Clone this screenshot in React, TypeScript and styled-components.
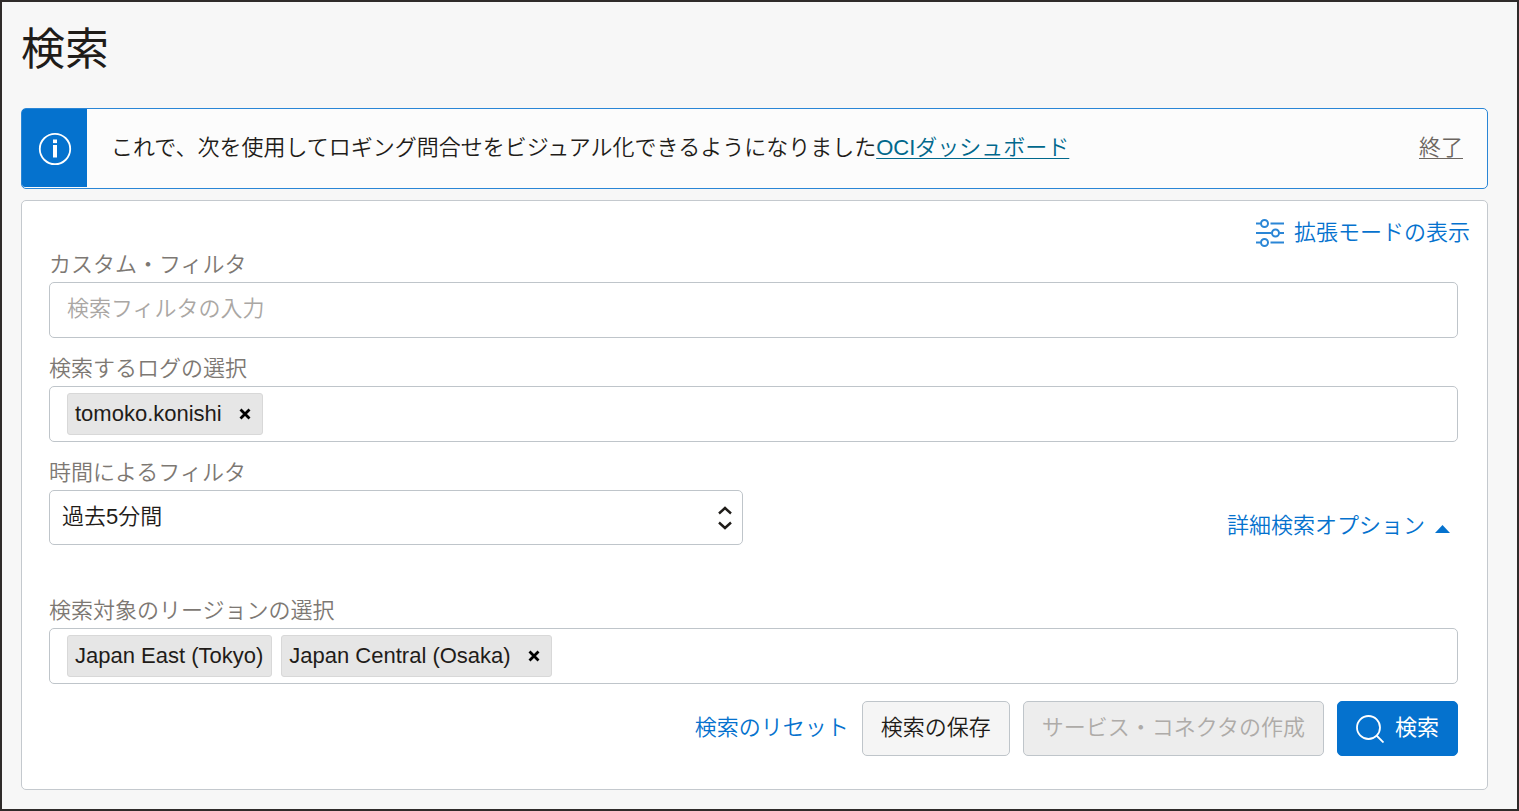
import React, { useState } from "react";
import styled, { createGlobalStyle, css } from "styled-components";

const GlobalStyle = createGlobalStyle`
  *, *::before, *::after { box-sizing: border-box; }
  body {
    margin: 0;
    background: #f7f7f7;
    color: #1f1c19;
    font-family: "Liberation Sans", "Noto Sans CJK JP", sans-serif;
    font-size: 22px;
    font-weight: 350;
    line-height: 28px;
  }
  button, input, select { font: inherit; color: inherit; }
`;

const Page = styled.main`
  min-height: 100vh;
  padding: 0 29px 19px 19px;
  border: 2px solid #2f2b2a;
`;

const Title = styled.h1`
  margin: 0;
  padding: 20px 0 30px;
  font-size: 44px;
  font-weight: 400;
  line-height: 56px;
`;

const Banner = styled.section`
  display: flex;
  min-height: 81px;
  margin-bottom: 11px;
  padding-bottom: 1px;
  border: 1px solid #2a86d6;
  border-radius: 5px;
  background: #fcfcfc;
`;

const BannerIcon = styled.div`
  display: flex;
  flex: none;
  align-items: center;
  justify-content: center;
  width: 65px;
  padding-top: 2px;
  border-radius: 3px 0 0 3px;
  background: #0572ce;
`;

const BannerBody = styled.div`
  display: flex;
  flex: 1;
  align-items: center;
  justify-content: space-between;
  gap: 24px;
  padding: 0 24px;
`;

const BannerText = styled.p`
  margin: 0;
`;

const BannerLink = styled.a`
  color: #00688c;
  text-decoration: underline;
  text-decoration-thickness: 1px;
  text-underline-offset: 3px;
`;

const DismissButton = styled.button`
  flex: none;
  padding: 0;
  border: 0;
  background: none;
  color: #6b6560;
  text-decoration: underline;
  text-decoration-thickness: 1px;
  text-underline-offset: 3px;
  cursor: pointer;
`;

const Panel = styled.section`
  padding: 18px 17px 33px 27px;
  border: 1px solid #c4c9ce;
  border-radius: 5px;
  background: #fff;
`;

const PanelTools = styled.div`
  display: flex;
  justify-content: flex-end;
  margin-bottom: 4px;
`;

const LinkButton = styled.button`
  display: inline-flex;
  align-items: center;
  gap: 10px;
  padding: 0;
  border: 0;
  background: none;
  color: #0572ce;
  cursor: pointer;
`;

const Form = styled.form`
  display: flex;
  flex-direction: column;
  gap: 17px;
  margin-right: 12px;
`;

const Field = styled.div`
  display: flex;
  flex-direction: column;
  gap: 3px;
`;

const Label = styled.label`
  color: #7d7873;
`;

const controlFrame = css`
  border: 1px solid #bfc5ca;
  border-radius: 5px;
  background: #fff;
`;

const TextInput = styled.input`
  ${controlFrame}
  width: 100%;
  height: 56px;
  padding: 0 17px 2px;
  &::placeholder { color: #aaa7a4; opacity: 1; }
`;

const TagBox = styled.div`
  ${controlFrame}
  display: flex;
  align-items: center;
  gap: 9px;
  min-height: 56px;
  padding: 0 17px;
`;

const TagInput = styled.input`
  flex: 1;
  min-width: 40px;
  height: 42px;
  padding: 0;
  border: 0;
  outline: 0;
  background: none;
`;

const Tag = styled.span`
  display: inline-flex;
  flex: none;
  align-items: center;
  gap: 17px;
  height: 42px;
  padding: 0 8px 0 7px;
  border: 1px solid #d8d8d8;
  border-radius: 3px;
  background: #e6e6e6;
`;

const TagRemove = styled.button`
  display: flex;
  margin-right: 3px;
  padding: 0;
  border: 0;
  background: none;
  color: #000;
  cursor: pointer;
`;

const TimeRow = styled.div`
  display: grid;
  grid-template-columns: 1fr 1fr;
  align-items: end;
  gap: 21px;
  margin-bottom: 35px;
`;

const SelectWrap = styled.div`
  display: grid;
  align-items: center;
  & > * { grid-area: 1 / 1; }
  & > svg {
    justify-self: end;
    margin-right: 11px;
    pointer-events: none;
  }
`;

const Select = styled.select`
  ${controlFrame}
  width: 100%;
  height: 55px;
  padding: 0 40px 2px 12px;
  appearance: none;
`;

const Advanced = styled.div`
  display: flex;
  justify-content: flex-end;
  padding: 0 8px 5px 0;
`;

const Actions = styled.div`
  display: flex;
  align-items: center;
  justify-content: flex-end;
  gap: 13px;
`;

const ActionButton = styled.button<{ $primary?: boolean }>`
  display: inline-flex;
  align-items: center;
  gap: 11px;
  height: 55px;
  padding: 0 18px;
  border: 1px solid ${(p) => (p.$primary ? "#0572ce" : "#bfc5ca")};
  border-radius: 5px;
  background: ${(p) => (p.$primary ? "#0572ce" : "#f5f5f5")};
  color: ${(p) => (p.$primary ? "#fff" : "#1f1c19")};
  font-weight: ${(p) => (p.$primary ? 400 : 350)};
  cursor: pointer;
  &:disabled {
    background: #ededed;
    color: #aeaba8;
    cursor: default;
  }
`;

const InfoIcon = () => (
  <svg width="34" height="34" viewBox="0 0 34 34" fill="none" aria-hidden="true">
    <circle cx="17" cy="17" r="15.2" stroke="#fff" strokeWidth="1.8" />
    <rect x="15" y="7.5" width="4" height="3.6" fill="#fff" />
    <rect x="15" y="13" width="4" height="12.5" fill="#fff" />
  </svg>
);

const SlidersIcon = () => (
  <svg width="28" height="28" viewBox="0 0 28 28" fill="none" stroke="#2a86d6" strokeWidth="2" aria-hidden="true">
    <path d="M0 4.500h4.500M14.500 4.500H28M0 14h15.500M23.500 14H28M0 23.500h4.500M14.500 23.500H28" />
    <circle cx="8.500" cy="4.500" r="3.500" />
    <circle cx="19.500" cy="14" r="3.500" />
    <circle cx="8.500" cy="23.500" r="3.500" />
  </svg>
);

const CrossIcon = () => (
  <svg width="12" height="12" viewBox="0 0 12 12" stroke="currentColor" strokeWidth="2.8" aria-hidden="true">
    <path d="M1.500 1.500l9 9M10.500 1.500l-9 9" />
  </svg>
);

const UpDownIcon = () => (
  <svg width="14" height="24" viewBox="0 0 14 24" fill="none" stroke="#1f1c19" strokeWidth="2.4" aria-hidden="true">
    <path d="M1 7.500l6-5.500 6 5.500M1 16.500l6 5.500 6-5.500" />
  </svg>
);

const CaretUpIcon = () => (
  <svg width="15" height="8" viewBox="0 0 15 8" aria-hidden="true">
    <path d="M0 8L7.500 0L15 8z" fill="#0572ce" />
  </svg>
);

const SearchIcon = () => (
  <svg width="28" height="28" viewBox="0 0 28 28" fill="none" stroke="#fff" strokeWidth="1.8" aria-hidden="true">
    <circle cx="12.500" cy="12.500" r="11.500" />
    <path d="M20.500 20.500l7 7" />
  </svg>
);

const CaretSlot = styled.span`
  display: flex;
  padding-top: 6px;
`;

const ButtonText = styled.span`
  padding-bottom: 2px;
`;

type TagItem = { name: string; removable: boolean };

function TagField({ id, label, initial }: { id: string; label: string; initial: TagItem[] }) {
  const [tags, setTags] = useState(initial);
  return (
    <Field>
      <Label htmlFor={id}>{label}</Label>
      <TagBox>
        {tags.map((tag) => (
          <Tag key={tag.name}>
            {tag.name}
            {tag.removable && (
              <TagRemove
                type="button"
                aria-label={tag.name}
                onClick={() => setTags(tags.filter((t) => t !== tag))}
              >
                <CrossIcon />
              </TagRemove>
            )}
          </Tag>
        ))}
        <TagInput id={id} type="text" />
      </TagBox>
    </Field>
  );
}

export default function App() {
  return (
    <>
      <GlobalStyle />
      <Page>
        <Title>検索</Title>
        <Banner>
          <BannerIcon>
            <InfoIcon />
          </BannerIcon>
          <BannerBody>
            <BannerText>
              これで、次を使用してロギング問合せをビジュアル化できるようになりました
              <BannerLink href="#dashboard">OCIダッシュボード</BannerLink>
            </BannerText>
            <DismissButton type="button">終了</DismissButton>
          </BannerBody>
        </Banner>
        <Panel>
          <PanelTools>
            <LinkButton type="button">
              <SlidersIcon />
              拡張モードの表示
            </LinkButton>
          </PanelTools>
          <Form onSubmit={(e) => e.preventDefault()}>
            <Field>
              <Label htmlFor="custom-filter">カスタム・フィルタ</Label>
              <TextInput id="custom-filter" type="text" placeholder="検索フィルタの入力" />
            </Field>
            <TagField
              id="logs"
              label="検索するログの選択"
              initial={[{ name: "tomoko.konishi", removable: true }]}
            />
            <TimeRow>
              <Field>
                <Label htmlFor="time-filter">時間によるフィルタ</Label>
                <SelectWrap>
                  <Select id="time-filter" defaultValue="5m">
                    <option value="5m">過去5分間</option>
                  </Select>
                  <UpDownIcon />
                </SelectWrap>
              </Field>
              <Advanced>
                <LinkButton type="button" aria-expanded="true">
                  詳細検索オプション
                  <CaretSlot>
                    <CaretUpIcon />
                  </CaretSlot>
                </LinkButton>
              </Advanced>
            </TimeRow>
            <TagField
              id="regions"
              label="検索対象のリージョンの選択"
              initial={[
                { name: "Japan East (Tokyo)", removable: false },
                { name: "Japan Central (Osaka)", removable: true },
              ]}
            />
            <Actions>
              <LinkButton type="reset">
                <ButtonText>検索のリセット</ButtonText>
              </LinkButton>
              <ActionButton type="button">
                <ButtonText>検索の保存</ButtonText>
              </ActionButton>
              <ActionButton type="button" disabled>
                <ButtonText>サービス・コネクタの作成</ButtonText>
              </ActionButton>
              <ActionButton type="submit" $primary>
                <SearchIcon />
                <ButtonText>検索</ButtonText>
              </ActionButton>
            </Actions>
          </Form>
        </Panel>
      </Page>
    </>
  );
}
